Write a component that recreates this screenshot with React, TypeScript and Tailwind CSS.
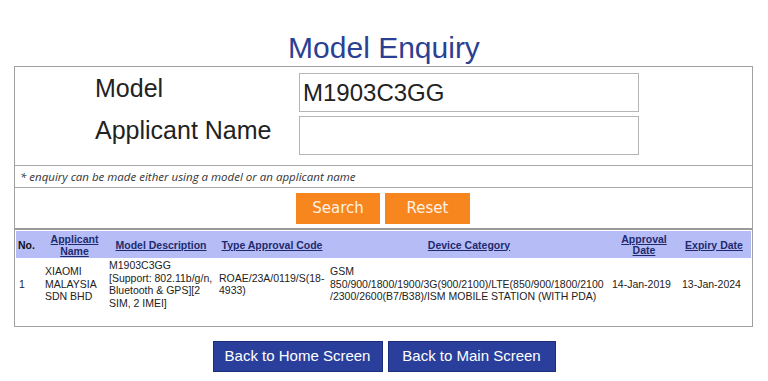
import React from "react";

const cols = "grid grid-cols-[27px_63px_110px_112px_282px_68px_72px]";

function HeaderLink({ children }: { children: React.ReactNode }) {
  return <span className="font-bold text-[#1f2a6e] underline underline-offset-1">{children}</span>;
}

export default function App() {
  return (
    <main className="min-h-[381px] bg-white font-['Liberation_Sans',Arial,sans-serif] text-[#222]">
      <h1 className="pt-[29px] text-center text-[30px] leading-[37px] text-[#2b3f93]">Model Enquiry</h1>

      <section className="mx-[14px] w-[739px] border border-[#a0a0a0]">
        <div className="grid grid-cols-[80px_204px_340px] gap-y-[4px] pt-[6px] pb-[10px]">
          <label className="col-start-2 self-start text-[25px] leading-[30px]">Model</label>
          <div className="h-[39px] border border-[#b5b5b5] px-[3px] pt-[4px] text-[24px] leading-[30px]">M1903C3GG</div>
          <label className="col-start-2 self-start text-[25px] leading-[28px]">Applicant Name</label>
          <div className="h-[39px] border border-[#b5b5b5]" />
        </div>

        <div className="border-t border-[#a8a8a8] px-[5px] py-[3px] font-['Open_Sans',sans-serif] text-[11.5px] italic leading-[15px] text-[#333]">
          * enquiry can be made either using a model or an applicant name
        </div>

        <div className="flex gap-[5px] border-t border-[#a8a8a8] pt-[5px] pb-[4px] pl-[281px]">
          <button className="h-[31px] w-[84px] bg-[#f7861f] font-['DejaVu_Sans',sans-serif] text-[15px] text-[#fff1e4]">Search</button>
          <button className="h-[31px] w-[85px] bg-[#f7861f] font-['DejaVu_Sans',sans-serif] text-[15px] text-[#fff1e4]">Reset</button>
        </div>

        <div className="h-[98px] border-t-2 border-[#9a9a9a] px-[1px] pt-[1px] text-[10.5px] leading-[12px]">
          <div className={`${cols} h-[27px] items-center bg-[#b6bdf6] text-center`}>
            <span className="pl-[2px] text-left font-bold text-[#111]">No.</span>
            <HeaderLink>Applicant<br />Name</HeaderLink>
            <HeaderLink>Model Description</HeaderLink>
            <HeaderLink>Type Approval Code</HeaderLink>
            <HeaderLink>Device Category</HeaderLink>
            <span className="pt-[1px] leading-[11px]"><HeaderLink>Approval<br />Date</HeaderLink></span>
            <HeaderLink>Expiry Date</HeaderLink>
          </div>
          <div className={`${cols} h-[52px] items-center leading-[12.5px]`}>
            <span className="pl-[3px]">1</span>
            <span className="pl-[2px]">XIAOMI<br />MALAYSIA<br />SDN BHD</span>
            <span className="pl-[3px]">M1903C3GG<br />[Support: 802.11b/g/n,<br />Bluetooth &amp; GPS][2<br />SIM, 2 IMEI]</span>
            <span className="pl-[3px]">ROAE/23A/0119/S(18-<br />4933)</span>
            <span className="pl-[2px]">GSM<br />850/900/1800/1900/3G(900/2100)/LTE(850/900/1800/2100<br />/2300/2600(B7/B38)/ISM MOBILE STATION (WITH PDA)</span>
            <span className="pl-[2px]">14-Jan-2019</span>
            <span className="pl-[4px]">13-Jan-2024</span>
          </div>
        </div>
      </section>

      <div className="mt-[14px] flex justify-center gap-[5px]">
        <button className="h-[31px] w-[170px] border border-[#1c2e7a] bg-[#2a3f9c] text-[15px] text-white">Back to Home Screen</button>
        <button className="h-[31px] w-[168px] border border-[#1c2e7a] bg-[#2a3f9c] text-[15px] text-white">Back to Main Screen</button>
      </div>
    </main>
  );
}
